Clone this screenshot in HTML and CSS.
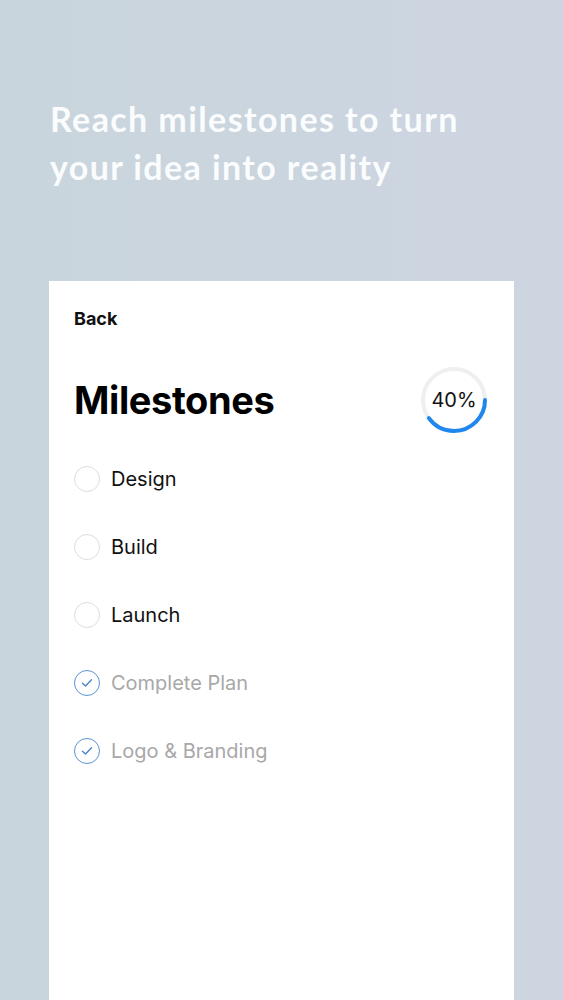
FILE: index.html
```html
<!DOCTYPE html>
<html lang="en">
<head>
    <meta charset="UTF-8">
    <meta name="viewport" content="width=device-width, initial-scale=1.0">
    <title>Milestones</title>
    <link rel="stylesheet" href="styles.css">
</head>
<body>
    <h1 class="headline">Reach milestones to turn your idea into reality</h1>

    <div class="card">
        <div class="back">Back</div>

        <div class="title-row">
            <h2 class="title">Milestones</h2>
            <div class="ring">
                <svg width="70" height="70" viewBox="0 0 70 70">
                    <circle cx="35" cy="35" r="31" fill="none" stroke="#efefef" stroke-width="4"/>
                    <!-- 40% of the circumference, starting at 3 o'clock -->
                    <circle cx="35" cy="35" r="31" fill="none" stroke="#1f87ee" stroke-width="4"
                            stroke-linecap="round" stroke-dasharray="77.9 194.8"/>
                </svg>
                <span class="ring-label">40%</span>
            </div>
        </div>

        <ul class="list">
            <li class="item"><span class="check"></span>Design</li>
            <li class="item"><span class="check"></span>Build</li>
            <li class="item"><span class="check"></span>Launch</li>
            <li class="item done">
                <span class="check">
                    <svg width="12" height="10" viewBox="0 0 12 10"><path d="M1.5 5.2 L4.5 8 L10.5 1.8" fill="none" stroke="#4a86c8" stroke-width="1.4" stroke-linecap="round" stroke-linejoin="round"/></svg>
                </span>Complete Plan
            </li>
            <li class="item done">
                <span class="check">
                    <svg width="12" height="10" viewBox="0 0 12 10"><path d="M1.5 5.2 L4.5 8 L10.5 1.8" fill="none" stroke="#4a86c8" stroke-width="1.4" stroke-linecap="round" stroke-linejoin="round"/></svg>
                </span>Logo &amp; Branding
            </li>
        </ul>
    </div>
</body>
</html>
```

FILE: styles.css
```css
html, body{
    margin: 0;
    padding: 0;
}
body{
    background: linear-gradient(90deg, #c9d5dc, #cdd5e1);
    min-height: 1000px;
    overflow: hidden;
    font-family: Inter, "Liberation Sans", sans-serif;
}
.headline{
    margin: 0;
    padding: 95px 70px 0 50px;
    height: 281px;
    box-sizing: border-box;
    font-family: Lato, "Open Sans", sans-serif;
    font-weight: 700;
    font-size: 34px;
    line-height: 48px;
    letter-spacing: 1.4px;
    color: #fafcfd;
}
.card{
    margin-left: 49px;
    width: 465px;
    min-height: 719px;
    background: #fff;
    padding: 28px 25px 0 25px;
    box-sizing: border-box;
}
.back{
    font-size: 18px;
    font-weight: 700;
    line-height: 20px;
    color: #111;
}
.title-row{
    margin-top: 36px;
    display: flex;
    align-items: center;
    justify-content: space-between;
}
.title{
    margin: 0;
    font-size: 38px;
    font-weight: 700;
    letter-spacing: -0.4px;
    color: #000;
}
.ring{
    position: relative;
    width: 70px;
    height: 70px;
}
.ring svg{
    display: block;
}
.ring-label{
    position: absolute;
    inset: 0;
    display: flex;
    align-items: center;
    justify-content: center;
    font-size: 20px;
    color: #111;
}
.list{
    list-style: none;
    margin: 10px 0 0 0;
    padding: 0;
}
.item{
    height: 68px;
    display: flex;
    align-items: center;
    font-size: 20px;
    color: #111;
}
.check{
    width: 24px;
    height: 24px;
    border: 1px solid #dddddd;
    border-radius: 50%;
    margin-right: 11px;
    display: flex;
    align-items: center;
    justify-content: center;
    flex-shrink: 0;
}
.done{
    color: #a8a8a8;
}
.done .check{
    border-color: #5d93cf;
}
```
